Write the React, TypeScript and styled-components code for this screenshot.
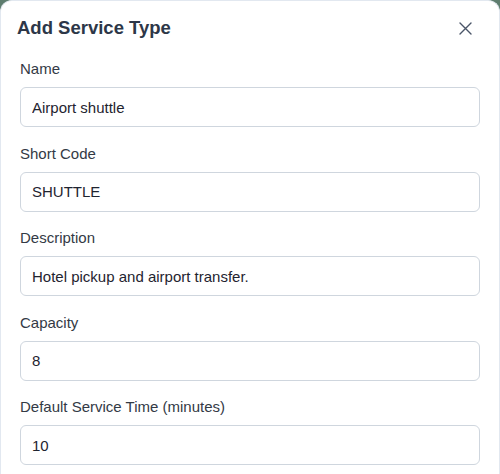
import React, { useState } from 'react';
import styled, { createGlobalStyle } from 'styled-components';

const GlobalStyle = createGlobalStyle`
  html, body {
    margin: 0;
    padding: 0;
    background: #5e7d6e;
    font-family: "Liberation Sans", Arial, sans-serif;
    overflow: hidden;
  }
`;

const Modal = styled.div`
  box-sizing: border-box;
  width: 500px;
  min-height: 490px;
  background: #ffffff;
  border: 1px solid #e2e8f0;
  border-bottom: none;
  border-radius: 12px 12px 0 0;
`;

const Header = styled.div`
  display: flex;
  align-items: center;
  justify-content: space-between;
  padding: 13px 20px 0 16px;
`;

const Title = styled.h2`
  margin: 0;
  font-size: 18.5px;
  line-height: 28px;
  font-weight: 700;
  color: #2d3748;
`;

const CloseButton = styled.button`
  display: flex;
  align-items: center;
  justify-content: center;
  width: 24px;
  height: 24px;
  padding: 0;
  margin-right: 2px;
  border: none;
  background: transparent;
  color: #4a5568;
  cursor: pointer;
`;

const Body = styled.div`
  display: flex;
  flex-direction: column;
  gap: 16.5px;
  padding: 17px 19px 0 19px;
`;

const Field = styled.div`
  display: flex;
  flex-direction: column;
  gap: 8px;
`;

const Label = styled.label`
  font-size: 15px;
  line-height: 20px;
  color: #333a45;
`;

const Input = styled.input`
  box-sizing: border-box;
  height: 40px;
  padding: 0 11px;
  border: 1px solid #cfd6de;
  border-radius: 6px;
  font-family: inherit;
  font-size: 15px;
  color: #1f2430;
  background: #ffffff;
  outline: none;

  &:focus {
    border-color: #4a9d7e;
  }
`;

const fields = [
  { id: 'name', label: 'Name', value: 'Airport shuttle' },
  { id: 'code', label: 'Short Code', value: 'SHUTTLE' },
  { id: 'description', label: 'Description', value: 'Hotel pickup and airport transfer.' },
  { id: 'capacity', label: 'Capacity', value: '8' },
  { id: 'time', label: 'Default Service Time (minutes)', value: '10' },
];

export default function App() {
  const [values, setValues] = useState<Record<string, string>>(
    Object.fromEntries(fields.map(f => [f.id, f.value]))
  );

  return (
    <>
      <GlobalStyle />
      <Modal>
        <Header>
          <Title>Add Service Type</Title>
          <CloseButton aria-label="Close">
            <svg width="13" height="13" viewBox="0 0 13 13" fill="none" stroke="currentColor" strokeWidth="1.4" strokeLinecap="round">
              <path d="M1 1L12 12M12 1L1 12" />
            </svg>
          </CloseButton>
        </Header>
        <Body>
          {fields.map(f => (
            <Field key={f.id}>
              <Label htmlFor={f.id}>{f.label}</Label>
              <Input
                id={f.id}
                value={values[f.id]}
                onChange={e => setValues({ ...values, [f.id]: e.target.value })}
              />
            </Field>
          ))}
        </Body>
      </Modal>
    </>
  );
}
